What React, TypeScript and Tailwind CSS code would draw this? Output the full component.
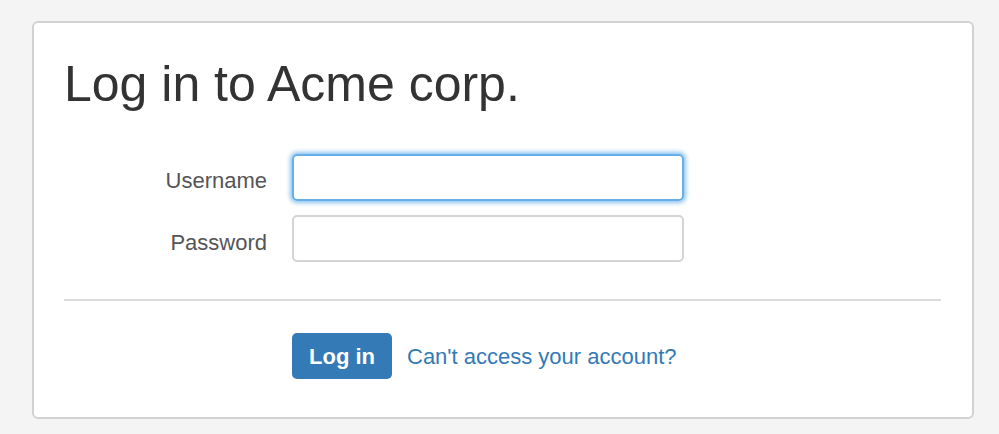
export default function App() {
  return (
    <div
      className="min-h-screen w-full bg-[#f4f4f4] pl-[32px] pt-[21px]"
      style={{ fontFamily: '"Liberation Sans", Arial, sans-serif' }}
    >
      <div className="h-[398px] w-[942px] rounded-[6px] border-2 border-[#d2d2d2] bg-white pl-[30px] pr-[31px] pt-[34px]">
        <h1 className="text-[50px] leading-[55px] font-normal text-[#333]">
          Log in to Acme corp.
        </h1>

        <form className="mt-[42px] flex flex-col gap-[14px]">
          <div className="flex gap-[25px]">
            <label className="w-[203px] pt-[11px] text-right text-[22px] leading-[31px] text-[#555]">
              Username
            </label>
            <input
              type="text"
              className="h-[47px] w-[392px] rounded-[5px] border-2 border-[#66afe9] px-3 text-[22px] shadow-[0_0_4px_2px_rgba(102,175,233,0.75)] outline-none"
            />
          </div>
          <div className="flex gap-[25px]">
            <label className="w-[203px] pt-[12px] text-right text-[22px] leading-[31px] text-[#555]">
              Password
            </label>
            <input
              type="password"
              className="h-[47px] w-[392px] rounded-[5px] border-2 border-[#d4d4d4] px-3 text-[22px] outline-none"
            />
          </div>
        </form>

        <div className="mt-[37px] h-[2px] bg-[#dadada]" />

        <div className="mt-[32px] flex items-center pl-[228px]">
          <button className="h-[46px] w-[100px] rounded-[5px] bg-[#337ab7] text-[22px] font-bold text-white">
            Log in
          </button>
          <a href="#" className="ml-[15px] text-[22px] text-[#337ab7]">
            Can't access your account?
          </a>
        </div>
      </div>
    </div>
  );
}
